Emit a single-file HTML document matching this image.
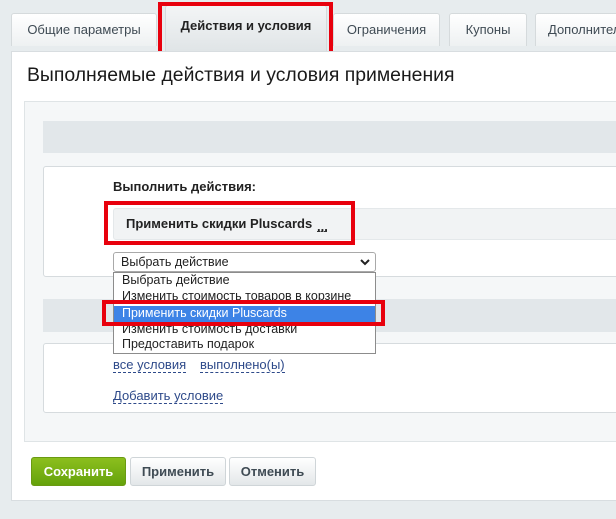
<html><head><style>
body{margin:0;width:616px;height:519px;background:#e7ecee;font-family:"Liberation Sans",sans-serif;position:relative;overflow:hidden}
div{position:absolute;box-sizing:border-box}
.tab{top:13px;height:33px;background:linear-gradient(#fff,#eef1f2);border:1px solid #d5dadc;border-bottom:none;border-radius:3px 3px 0 0;font-size:13px;color:#3f4b54;text-align:center;line-height:31px}
.red{border:4px solid #e8000d}
.btn{top:457px;height:29px;border-radius:3px;font-size:13px;font-weight:bold;text-align:center;line-height:28px;color:#3f4b54;background:linear-gradient(#fff,#e3e7e9);border:1px solid #cfd5d8}
.lnk{color:#2e4a8a;font-size:13px;border-bottom:1px dashed #2e4a8a;position:absolute}
.opt{position:absolute;left:0;width:100%;height:16px;font-size:12.5px;line-height:15px;padding-left:8px;color:#222}
</style></head><body>
<div class="tab" style="left:11px;width:146px">Общие параметры</div>
<div class="tab" style="left:165px;width:162px;top:5px;height:48px;background:linear-gradient(#f3f5f6,#dfe4e6);font-weight:bold;color:#222;line-height:40px">Действия и условия</div>
<div class="red" style="left:158px;top:2px;width:175px;height:54px"></div>
<div class="tab" style="left:333px;width:107px">Ограничения</div>
<div class="tab" style="left:449px;width:78px">Купоны</div>
<div class="tab" style="left:535px;width:90px;text-align:left;padding-left:12px">Дополнительно</div>
<div style="left:11px;top:51px;width:610px;height:450px;background:#fff;border:1px solid #d8dde0"></div>
<div style="left:27px;top:64px;font-size:19.4px;color:#1a1a1a">Выполняемые действия и условия применения</div>
<div style="left:24px;top:101px;width:600px;height:341px;background:#f5f7f8;border:1px solid #dfe4e6"></div>
<div style="left:43px;top:121px;width:580px;height:32px;background:#e2e7ea"></div>
<div style="left:43px;top:166px;width:580px;height:111px;background:#fff;border:1px solid #d6dbde;border-radius:3px"></div>
<div style="left:113px;top:179px;font-size:13px;font-weight:bold;color:#222">Выполнить действия:</div>
<div style="left:113px;top:208px;width:510px;height:32px;background:#f1f3f4;border:1px solid #e4e8ea;border-radius:3px"></div>
<div style="left:126px;top:216px;font-size:13px;font-weight:bold;color:#222">Применить скидки Pluscards</div>
<div style="left:317px;top:216px;width:10px;height:16px;border-bottom:1px dashed #333"><div style="left:0;top:7px;font-size:13px;font-weight:bold;color:#222;line-height:8px">...</div></div>
<div class="red" style="left:104px;top:201px;width:251px;height:44px"></div>
<div style="left:43px;top:299px;width:580px;height:33px;background:#e2e7ea"></div>
<div style="left:43px;top:343px;width:580px;height:70px;background:#fff;border:1px solid #d6dbde;border-radius:3px"></div>
<div style="left:113px;top:252px;width:263px;height:20px;background:#fff;border:1px solid #a9a9a9;border-radius:3px;font-size:12.5px;line-height:18px;padding-left:7px;color:#222">Выбрать действие<svg style="position:absolute;right:5px;top:6px" width="10" height="7" viewBox="0 0 10 7"><path d="M1 1L5 5L9 1" stroke="#222" stroke-width="2" fill="none"/></svg></div>
<div style="left:113px;top:272px;width:263px;height:82px;background:#fff;border:1px solid #8c8c8c">
<div class="opt" style="top:0">Выбрать действие</div>
<div class="opt" style="top:16px">Изменить стоимость товаров в корзине</div>
<div class="opt" style="top:33px;background:#3d83e6;color:#fff">Применить скидки Pluscards</div>
<div class="opt" style="top:49px">Изменить стоимость доставки</div>
<div class="opt" style="top:64px">Предоставить подарок</div>
</div>
<div class="red" style="left:102px;top:300px;width:283px;height:26px"></div>
<span class="lnk" style="left:113px;top:357px">все условия</span>
<span class="lnk" style="left:200px;top:357px">выполнено(ы)</span>
<span class="lnk" style="left:113px;top:388px">Добавить условие</span>
<div class="btn" style="left:31px;width:95px;background:linear-gradient(#8cbf1e,#65a20b);border-color:#6a9a12;color:#fff">Сохранить</div>
<div class="btn" style="left:130px;width:96px">Применить</div>
<div class="btn" style="left:229px;width:87px">Отменить</div>
</body></html>
